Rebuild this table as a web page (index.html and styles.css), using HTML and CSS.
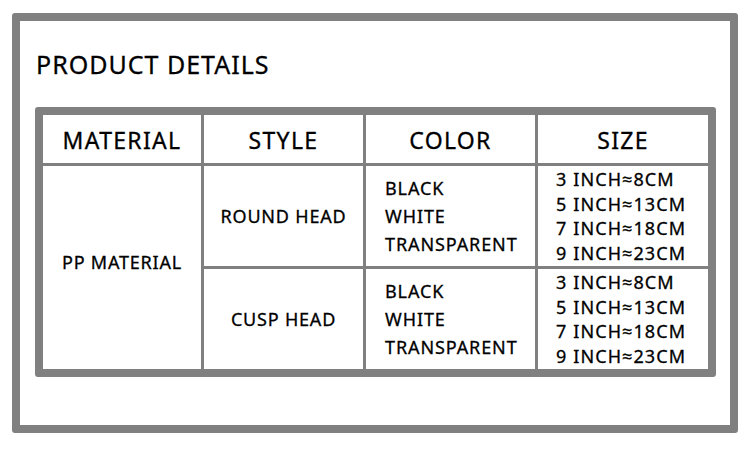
FILE: index.html
```html
<!DOCTYPE html>
<html>
<head>
<meta charset="utf-8">
<link rel="stylesheet" href="styles.css">
</head>
<body>
<div class="frame">
  <h1 class="title">PRODUCT DETAILS</h1>
  <div class="table">
    <div class="cell head">MATERIAL</div>
    <div class="cell head">STYLE</div>
    <div class="cell head">COLOR</div>
    <div class="cell head">SIZE</div>
    <div class="cell material">PP MATERIAL</div>
    <div class="cell style">ROUND HEAD</div>
    <div class="cell list color">
      <span>BLACK</span><span>WHITE</span><span>TRANSPARENT</span>
    </div>
    <div class="cell list size">
      <span>3 INCH≈8CM</span><span>5 INCH≈13CM</span><span>7 INCH≈18CM</span><span>9 INCH≈23CM</span>
    </div>
    <div class="cell style">CUSP HEAD</div>
    <div class="cell list color">
      <span>BLACK</span><span>WHITE</span><span>TRANSPARENT</span>
    </div>
    <div class="cell list size">
      <span>3 INCH≈8CM</span><span>5 INCH≈13CM</span><span>7 INCH≈18CM</span><span>9 INCH≈23CM</span>
    </div>
  </div>
</div>
</body>
</html>
```

FILE: styles.css
```css
html, body {
  margin: 0;
  padding: 0;
  background: #ffffff;
}
body {
  padding: 13px 0 0 12px;
  font-family: "Noto Sans", "Open Sans", sans-serif;
  color: #000;
  -webkit-text-stroke: 0.3px #000;
}
.frame {
  box-sizing: border-box;
  width: 726px;
  height: 420px;
  border: 8px solid #808080;
  border-radius: 3px;
  padding: 28px 15px 0 15px;
}
.title {
  margin: 0 0 28px 1px;
  font-size: 25px;
  line-height: 30px;
  font-weight: 400;
  letter-spacing: 1px;
}
.table {
  width: 681px;
  box-sizing: border-box;
  border: 8px solid #808080;
  border-radius: 3px;
  background: #808080;
  display: grid;
  grid-template-columns: 158px 159px 169px 170px;
  grid-template-rows: 48px 100px 100px;
  gap: 3px;
}
.cell {
  background: #fff;
  display: flex;
  align-items: center;
  justify-content: center;
  font-size: 18px;
  letter-spacing: 0.8px;
}
.head {
  font-size: 23px;
  letter-spacing: 1.3px;
  padding-top: 2px;
}
.material {
  grid-row: span 2;
  padding-bottom: 11px;
}
.list {
  flex-direction: column;
  align-items: flex-start;
  justify-content: center;
}
.color {
  padding-left: 19px;
  line-height: 28px;
  letter-spacing: 0.9px;
}
.size {
  padding-left: 18px;
  line-height: 24.5px;
  letter-spacing: 1.1px;
}
```
